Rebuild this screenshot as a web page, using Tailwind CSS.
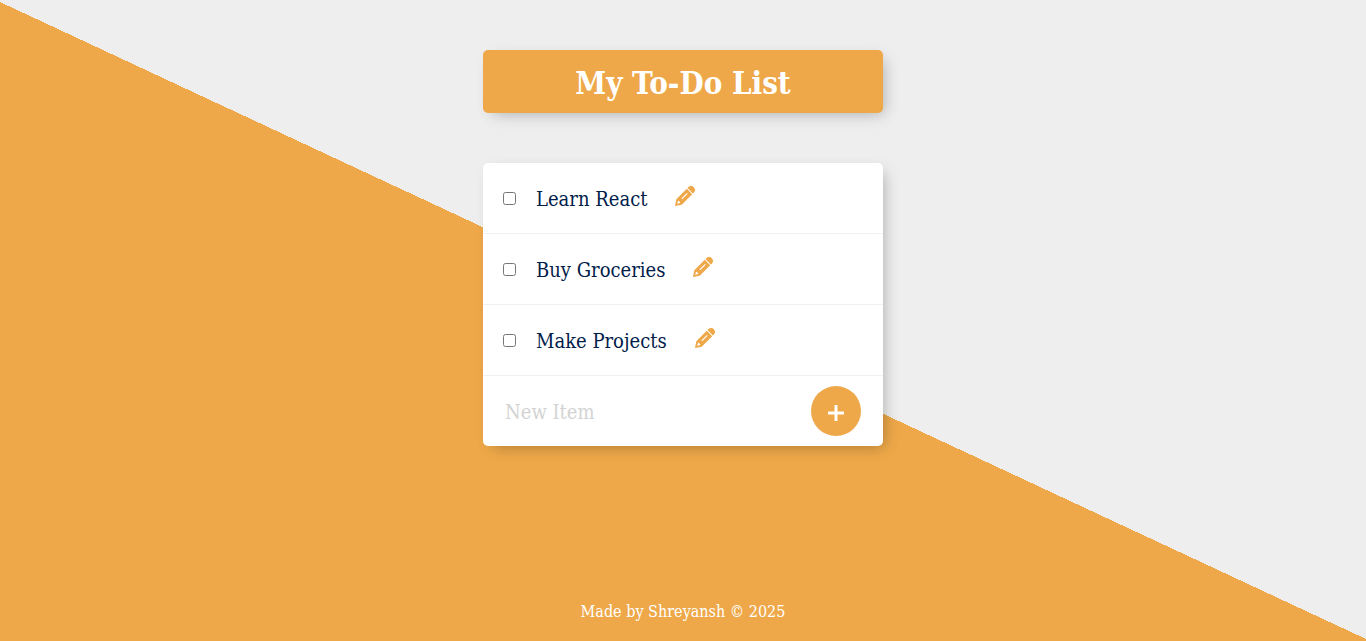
<!DOCTYPE html>
<html lang="en">
<head>
<meta charset="utf-8">
<meta name="viewport" content="width=device-width, initial-scale=1">
<title>My To-Do List</title>
<script src="https://cdn.jsdelivr.net/npm/@tailwindcss/browser@4"></script>
</head>
<body class="flex min-h-screen flex-col bg-[linear-gradient(25deg,#eea849_50%,#eeeeee_50%)] font-['DejaVu_Serif_Condensed','DejaVu_Serif',serif] text-[#00204a]">
<svg class="hidden">
  <symbol id="pencil" viewBox="0 0 20 20"><path fill-rule="evenodd" d="M0 20L1.300 13.300L11.800 2.800L17.200 8.200L6.700 18.700ZM2.200 17.800L5.300 17L4.600 15.400L3 14.700ZM6.400 12.500L7.200 13.300L12.700 7.800L11.900 7Z"/><path d="M12.500 2.100L13.800 .800C15.300-.4 17.300-.3 18.800 1.200C20.300 2.700 20.400 4.700 19.200 6.200L17.900 7.500Z"/></symbol>
</svg>
<main class="mx-auto flex w-full max-w-[400px] flex-1 flex-col gap-[50px] pt-[50px]">
  <header class="rounded-[5px] bg-[#eea849] pt-[14px] pb-[10px] text-center text-white shadow-[5px_5px_15px_-5px_rgba(0,0,0,0.3)]">
    <h1 class="text-[31px] leading-[39px] font-bold">My To-Do List</h1>
  </header>
  <section class="rounded-[5px] bg-white shadow-[5px_5px_15px_-5px_rgba(0,0,0,0.3)]">
    <ul>
      <li class="flex h-[71px] items-center border-b border-[#f1f1f1] pl-5">
        <input id="item-1" type="checkbox" class="size-[13px]">
        <label for="item-1" class="ml-5 pt-0.5 text-[20px] leading-7">Learn React</label>
        <button type="button" aria-label="Edit Learn React" class="mb-1 ml-7 text-[#eea849]"><svg class="size-5 fill-current"><use href="#pencil"/></svg></button>
      </li>
      <li class="flex h-[71px] items-center border-b border-[#f1f1f1] pl-5">
        <input id="item-2" type="checkbox" class="size-[13px]">
        <label for="item-2" class="ml-5 pt-0.5 text-[20px] leading-7">Buy Groceries</label>
        <button type="button" aria-label="Edit Buy Groceries" class="mb-1 ml-7 text-[#eea849]"><svg class="size-5 fill-current"><use href="#pencil"/></svg></button>
      </li>
      <li class="flex h-[71px] items-center border-b border-[#f1f1f1] pl-5">
        <input id="item-3" type="checkbox" class="size-[13px]">
        <label for="item-3" class="ml-5 pt-0.5 text-[20px] leading-7">Make Projects</label>
        <button type="button" aria-label="Edit Make Projects" class="mb-1 ml-7 text-[#eea849]"><svg class="size-5 fill-current"><use href="#pencil"/></svg></button>
      </li>
    </ul>
    <form class="flex h-[70px] items-center px-[22px]">
      <input type="text" aria-label="New Item" placeholder="New Item" class="h-[60px] min-w-0 flex-1 bg-transparent pt-0.5 text-[20px] outline-none placeholder:text-[#d3d3d3]">
      <button type="button" aria-label="Add item" class="flex size-[50px] items-center justify-center rounded-full bg-[#eea849] pt-1 text-white"><svg class="size-4" viewBox="0 0 16 16"><path d="M8 0v16M0 8h16" fill="none" stroke="currentColor" stroke-width="3"/></svg></button>
    </form>
  </section>
</main>
<footer class="pb-[17px] text-center text-[16px] leading-6 text-white">Made by Shreyansh © 2025</footer>
</body>
</html>
